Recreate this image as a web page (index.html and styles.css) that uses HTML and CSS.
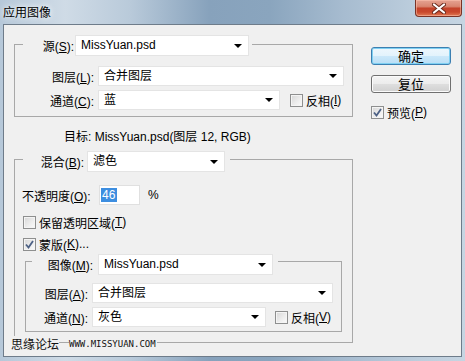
FILE: index.html
```html
<!DOCTYPE html>
<html lang="zh-CN">
<head>
<meta charset="utf-8">
<title>应用图像</title>
<link rel="stylesheet" href="styles.css">
</head>
<body>
<div class="window">
  <div class="titlebar">
    <span class="title">应用图像</span>
    <span class="close">
      <svg width="14" height="11" viewBox="0 0 14 11"><path d="M2 1.5 L12 9.5 M12 1.5 L2 9.5" stroke="#6a2a1c" stroke-width="4" stroke-linecap="round"/><path d="M2 1.5 L12 9.5 M12 1.5 L2 9.5" stroke="#fff" stroke-width="2.2" stroke-linecap="round"/></svg>
    </span>
  </div>
  <div class="client">
    <div class="main">
      <div class="group g-source">
        <div class="legend lg-source">
          <span class="lbl w51">源(<u>S</u>):</span>
          <div class="select s-src">MissYuan.psd</div>
        </div>
        <div class="row r-first r-src">
          <span class="lbl w79">图层(<u>L</u>):</span>
          <div class="select s-src-layer">合并图层</div>
        </div>
        <div class="row r-next r-src">
          <span class="lbl w79">通道(<u>C</u>):</span>
          <div class="select s-src-ch">蓝</div>
          <span class="check c-inv"><span class="box"></span>反相(<u>I</u>)</span>
        </div>
      </div>
      <div class="target">目标: MissYuan.psd(图层 12, RGB)</div>
      <div class="group g-blend">
        <div class="legend lg-blend">
          <span class="lbl w61">混合(<u>B</u>):</span>
          <div class="select s-blend">滤色</div>
        </div>
        <div class="opacity">
          <span class="op-lbl">不透明度(<u>O</u>):</span>
          <div class="input"><span class="sel">46</span></div>
          <span class="pct">%</span>
        </div>
        <div class="check c-row c-keep"><span class="box"></span>保留透明区域(<u>T</u>)</div>
        <div class="check c-row c-mask"><span class="box checked"><svg width="9" height="9" viewBox="0 0 9 9"><path d="M1 4.5 L3.5 7.5 L8 1" fill="none" stroke="#4d6185" stroke-width="1.8"/></svg></span>蒙版(<u>K</u>)...</div>
        <div class="group g-mask">
          <div class="legend lg-mask">
            <span class="lbl w61">图像(<u>M</u>):</span>
            <div class="select s-mask">MissYuan.psd</div>
          </div>
          <div class="row r-first r-mask">
            <span class="lbl w62">图层(<u>A</u>):</span>
            <div class="select s-mask-layer">合并图层</div>
          </div>
          <div class="row r-next r-mask">
            <span class="lbl w62">通道(<u>N</u>):</span>
            <div class="select s-mask-ch">灰色</div>
            <span class="check c-inv"><span class="box"></span>反相(<u>V</u>)</span>
          </div>
        </div>
      </div>
    </div>
    <div class="side">
      <div class="btn btn-default">确定</div>
      <div class="btn btn-reset">复位</div>
      <div class="check c-preview"><span class="box checked"><svg width="9" height="9" viewBox="0 0 9 9"><path d="M1 4.5 L3.5 7.5 L8 1" fill="none" stroke="#4d6185" stroke-width="1.8"/></svg></span>预览(<u>P</u>)</div>
    </div>
  </div>
  <div class="watermark"><span class="wm-cn">思缘论坛</span><span class="wm-url">www.missyuan.com</span></div>
</div>
</body>
</html>
```

FILE: styles.css
```css
* { box-sizing: border-box; }
html, body { margin: 0; padding: 0; }
body {
  font-family: "Liberation Sans", "Noto Sans CJK SC", sans-serif;
  font-size: 12px;
  color: #000;
  background: #f0f0f0;
}
u { text-decoration: underline; text-underline-offset: 1px; }

.window {
  position: relative;
  width: 465px;
  height: 361px;
  display: flex;
  flex-direction: column;
  background: linear-gradient(90deg, #b6c8d9 0%, #cfdbe6 14%, #b9cada 28%, #87a2bc 45%, #8aa5be 58%, #a7bcd0 74%, #bdcedd 90%, #c6d5e2 100%);
}

.titlebar {
  height: 24px;
  display: flex;
  justify-content: space-between;
  align-items: flex-start;
  padding: 0 3px 0 3px;
}
.title {
  margin-top: 4px;
  font-family: "Noto Sans CJK SC", sans-serif;
  font-size: 12px;
  line-height: 15px;
  text-shadow: 0 0 5px rgba(255,255,255,0.9), 0 0 8px rgba(255,255,255,0.7);
}
.close {
  width: 47px;
  height: 17px;
  border: 1px solid #7a3326;
  border-top: none;
  border-radius: 0 0 4px 4px;
  background: linear-gradient(#e5a392 0%, #d98670 40%, #c4432a 52%, #c9482c 75%, #e07a55 100%);
  box-shadow: inset 0 0 0 1px rgba(255,200,180,0.5);
  display: flex;
  align-items: center;
  justify-content: center;
}

.client {
  margin: 0 3px;
  height: 333px;
  border: 1px solid #6e7c8a;
  background: #f0f0f0;
  display: flex;
}

.main {
  width: 349px;
  flex: none;
  padding: 19px 0 0 10px;
}

.group {
  border: 1px solid #a8a8a8;
}
.g-source { width: 339px; padding-bottom: 6px; }
.g-blend { width: 339px; margin-top: 14px; padding-bottom: 10px; }
.g-mask { width: 317px; margin: 9px 0 0 10px; padding-bottom: 4px; }

.legend {
  display: flex;
  align-items: center;
  width: max-content;
  background: #f0f0f0;
}
.lg-source { margin: -10px 0 0 8px; padding-right: 3px; }
.lg-blend { margin: -9px 0 0 8px; padding-right: 5px; }
.lg-mask { margin: -8px 0 0 6px; padding-right: 5px; }

.lbl { flex: none; text-align: right; white-space: nowrap; }
.w51 { width: 51px; margin-right: 1px; }
.w61 { width: 61px; margin-right: 4px; }
.w62 { width: 62px; margin-right: 4px; }
.w79 { width: 79px; margin-right: 4px; }
.lg-mask .w61 { margin-right: 5px; }
.lg-blend .w61 { margin-right: 3px; }

.select {
  position: relative;
  flex: none;
  height: 20px;
  line-height: 18px;
  padding-left: 5px;
  background: #fff;
  border: 1px solid #e4e4e4;
  white-space: nowrap;
}
.legend .select { height: 21px; line-height: 19px; }
.select::after {
  content: "";
  position: absolute;
  right: 6px;
  top: 50%;
  margin-top: -2px;
  border-style: solid;
  border-width: 4px 4px 0 4px;
  border-color: #000 transparent transparent transparent;
}
.s-src { width: 174px; }
.s-src-layer { width: 246px; }
.s-src-ch { width: 182px; }
.s-blend { width: 138px; }
.s-mask { width: 175px; }
.s-mask-layer { width: 241px; }
.s-mask-ch { width: 174px; }

.row { display: flex; align-items: center; height: 20px; }
.r-first { margin-top: 10px; }
.r-next { margin-top: 4px; }
.r-mask.r-first { margin-top: 8px; }

.check {
  display: flex;
  align-items: center;
  white-space: nowrap;
}
.box {
  width: 13px;
  height: 13px;
  flex: none;
  margin-right: 3px;
  border: 1px solid #8e8f8f;
  background: linear-gradient(135deg, #d6d6d6 0%, #eeeeee 60%, #fbfbfb 100%);
  box-shadow: inset 0 0 0 1px #f4f4f4;
  display: flex;
  align-items: center;
  justify-content: center;
}
.c-inv { margin-left: 10px; }
.r-mask .c-inv { margin-left: 9px; }

.target {
  margin: 12px 0 0 50px;
  height: 16px;
  line-height: 16px;
  white-space: nowrap;
}

.opacity {
  display: flex;
  align-items: center;
  height: 20px;
  margin: 13px 0 0 7px;
}
.op-lbl { width: 77px; flex: none; white-space: nowrap; }
.input {
  width: 41px;
  height: 20px;
  background: #fff;
  border: 1px solid #e0e0e0;
  padding: 2px 0 0 1px;
}
.sel {
  display: inline-block;
  background: #3d8ee0;
  color: #fff;
  line-height: 14px;
  padding: 0 2px 0 1px;
}
.pct { margin-left: 8px; }

.c-row { height: 16px; margin-left: 8px; }
.c-keep { margin-top: 9px; }
.c-mask { margin-top: 6px; }

.side {
  flex: none;
  padding: 22px 0 0 18px;
  display: flex;
  flex-direction: column;
}
.btn {
  width: 80px;
  height: 18px;
  border-radius: 3px;
  text-align: center;
  line-height: 16px;
  font-family: "Noto Sans CJK SC", sans-serif;
  font-size: 13px;
}
.btn-default {
  border: 1px solid #3c7fb1;
  background: linear-gradient(#eef7fd 0%, #e3f3fc 48%, #cbe8fa 52%, #b9def6 100%);
  box-shadow: inset 0 0 0 1px #7fd0f2;
}
.btn-reset {
  margin-top: 10px;
  border: 1px solid #707070;
  background: linear-gradient(#f4f4f4 0%, #ececec 48%, #dedede 52%, #d0d0d0 100%);
  box-shadow: inset 0 0 0 1px #fbfbfb;
}
.c-preview { margin-top: 12px; height: 14px; }

.watermark {
  position: absolute;
  left: 11px;
  top: 336px;
  display: flex;
  align-items: center;
  gap: 10px;
}
.wm-cn {
  font-family: "Noto Sans CJK SC", sans-serif;
  font-size: 12px;
  line-height: 16px;
  background: #f0f0f0;
  color: #111;
}
.wm-url {
  font-family: "DejaVu Sans Mono", monospace;
  font-size: 9px;
  line-height: 9px;
  text-transform: uppercase;
  background: #f0f0f0;
  color: #111;
  padding-right: 1px;
}
```
